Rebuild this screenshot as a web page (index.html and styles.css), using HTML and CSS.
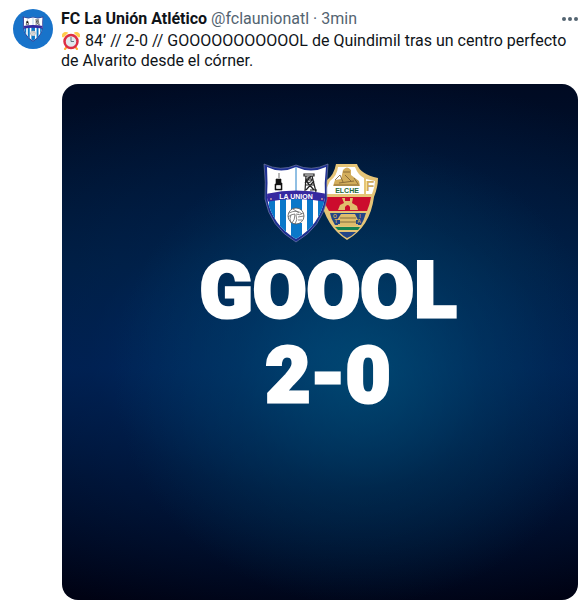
FILE: index.html
```
<!DOCTYPE html>
<html lang="es">
<head>
    <meta charset="UTF-8">
    <meta name="viewport" content="width=device-width, initial-scale=1">
    <title>FC La Unión Atlético</title>
    <link rel="stylesheet" href="styles.css">
</head>
<body>
    <!-- club crest, used by the avatar and the goal card -->
    <svg class="defs" aria-hidden="true">
        <defs>
            <clipPath id="shield">
                <path d="M4 4 Q18 11 33 4 Q48 11 63 4 Q61 20 62 35 Q57 62 33 76 Q9 62 4 35 Q5 20 4 4Z"/>
            </clipPath>
            <symbol id="crest-union" viewBox="0 0 66 80">
                <path d="M1 1 Q18 9 33 2 Q48 9 65 1 Q63 20 64 36 Q59 64 33 79 Q7 64 2 36 Q3 20 1 1Z" fill="#1d2f92" stroke="#7f88ad" stroke-width=".6"/>
                <g clip-path="url(#shield)">
                    <path d="M0 0h66v80H0z" fill="#fff"/>
                    <path d="M6 34h6v42H6zM17 34h6v42h-6zM28 34h11v14H28zM28 60h11v20H28zM44 34h6v42h-6zM55 34h6v42h-6z" fill="#0b78c9"/>
                    <path d="M33 3v28" stroke="#2380c8"/>
                    <path d="M3 31 Q33 24 64 31 V39 Q33 33 3 39Z" fill="#3629a0"/>
                </g>
                <path d="M16 10v5M13 16h5v4h1v7h-7v-6h1zM13 21v5h5v-4h-5" fill="#111" stroke="#111" stroke-width=".6"/>
                <path d="M13.500 22.500h4v3h-4z" fill="#eee"/>
                <path d="M41 11h10v2H41zM43 13l-1 15M49 13l4 16M43 17h7M43 22h8M43 27l8-9M43 18l8 9M42 20l6-7M47 27h7" fill="none" stroke="#222" stroke-width="1.200"/>
                <circle cx="46" cy="17" r="2.500" fill="none" stroke="#222"/>
                <circle cx="8" cy="36" r="1" fill="#c99aa0"/>
                <circle cx="59" cy="36" r="1" fill="#c99aa0"/>
                <circle cx="33" cy="53" r="8" fill="#fff" stroke="#555" stroke-width=".8"/>
                <path d="M26 50q8-4 13 1M25 54q3-3 7-3 0 6-3 9M28 60q-2-5 0-8M33 51q4 2 7-1M33 52q2 5-1 9M35 54l6-1M35 57l4 0M30 46l6 4" fill="none" stroke="#555" stroke-width=".7"/>
            </symbol>
        </defs>
    </svg>

    <article class="post">
        <a class="avatar" href="#" aria-label="FC La Unión Atlético">
            <svg viewBox="0 0 66 80"><use href="#crest-union"/></svg>
        </a>
        <div class="post-body">
            <header class="post-header">
                <a class="name" href="#">FC La Unión Atlético</a>
                <span class="meta">@fclaunionatl · 3min</span>
                <button class="more" type="button" aria-label="Más opciones">
                    <svg viewBox="0 0 16 4"><circle cx="2" cy="2" r="2"/><circle cx="8" cy="2" r="2"/><circle cx="14" cy="2" r="2"/></svg>
                </button>
            </header>
            <p class="text">
                <svg class="clock" viewBox="0 0 36 36" aria-hidden="true">
                    <path d="M2 10 10 2a6 6 0 0 0-8 8M34 10l-8-8a6 6 0 0 1 8 8" fill="#ffcc4d" stroke="#ffcc4d" stroke-width="3"/>
                    <path d="M6 34l5-6M30 34l-5-6" stroke="#ffac33" stroke-width="4" stroke-linecap="round"/>
                    <circle cx="18" cy="19" r="13" fill="#e1e8ed" stroke="#dd2e44" stroke-width="5"/>
                    <path d="M18 10v9h6" fill="none" stroke="#66757f" stroke-width="2"/>
                </svg>
                84’ // 2-0 // GOOOOOOOOOOOL de Quindimil tras un centro perfecto de Alvarito desde el córner.
            </p>
            <section class="goal-card">
                <div class="crests">
                    <svg class="crest" viewBox="0 0 66 80" aria-hidden="true">
                        <use href="#crest-union"/>
                        <text class="crest-label union" x="33" y="36">LA UNION</text>
                    </svg>
                    <svg class="crest-elche" viewBox="0 0 54 78" aria-hidden="true">
                        <path d="M11 1h21q3 10 21 14 0 9-4 19-4 30-27 43Q1 64-5 34L2 17Q9 12 11 1z" fill="#e5c477"/>
                        <path d="M13 4h17q3 8 9 11v16H-1l6-13q7-5 8-14z" fill="#fff"/>
                        <path d="M41 16l9 2q0 6-3 13h-6z" fill="#fff"/>
                        <path d="M-2 34h48q-1 7-4 14H4Q0 42-2 34z" fill="#cc0c2d"/>
                        <path d="M5 50h36q-2 7-5 12H10q-4-6-5-12z" fill="#234588"/>
                        <path d="M10 64h25l-2 3H13z" fill="#168150"/>
                        <path d="M14 69h17q-4 4-9 6-4-2-8-6z" fill="#234588"/>
                        <path d="M18 7q4-5 8 0v5l8 6 1 5H8l2-6 6-1z" fill="#d2ad5c"/>
                        <path d="M10 17l5-5 3 7M18 9h7M20 12l6 6M14 20l15-2M29 15l4 6M9 22h25" fill="none" stroke="#785b2e" stroke-width=".8"/>
                        <path d="M17 35h3v3h5v-3h3l-1 5 5 3 1 4H13l2-5 4-2z" fill="#e0bd6d"/>
                        <path d="M20 47v-3q3-4 5 0v3z" fill="#cc0c2d"/>
                        <path d="M16 51h14l3 6h-2v4h2v2H13v-2h2v-4h-3z" fill="#dfbd6c"/>
                        <path d="M15 55h16M15 59h16" stroke="#6b5a35" stroke-width=".8"/>
                        <text class="crest-label elche" x="22" y="30">ELCHE</text>
                        <text class="crest-label letter" x="45" y="28">F</text>
                        <text class="crest-label motto" x="10" y="55">O</text>
                        <text class="crest-label motto" x="11" y="60">T</text>
                        <text class="crest-label motto" x="35" y="55">I</text>
                        <text class="crest-label motto" x="34" y="60">A</text>
                    </svg>
                </div>
                <h2 class="score">GOOOL<br>2-0</h2>
            </section>
        </div>
    </article>
</body>
</html>
```
FILE: styles.css
```
* {
    box-sizing: border-box;
}

body {
    margin: 0;
    background: #fff;
    color: #0f1419;
    font-family: Roboto, 'Liberation Sans', sans-serif;
    font-size: 16px;
    line-height: 20px;
}

a {
    color: inherit;
    text-decoration: none;
}

.defs {
    position: absolute;
    width: 0;
    height: 0;
}

.post {
    display: flex;
    gap: 8px;
    padding: 9px 10px 4px 13px;
}

.avatar {
    display: flex;
    flex: none;
    align-items: center;
    justify-content: center;
    width: 40px;
    height: 40px;
    border-radius: 50%;
    background: #1873ca;
}

.avatar svg {
    width: 22px;
    height: 26px;
}

.post-body {
    flex: 1;
    min-width: 0;
}

.post-header {
    display: flex;
    gap: 4px;
    align-items: center;
    height: 20px;
}

.name {
    font-weight: 700;
}

.meta {
    color: #536471;
}

.more {
    display: flex;
    margin-left: auto;
    padding: 0;
    border: 0;
    background: none;
    cursor: pointer;
}

.more svg {
    width: 16px;
    height: 4px;
    fill: #536471;
}

.text {
    margin: 2px 0 13px;
}

.clock {
    width: 18px;
    height: 18px;
    margin: 0 1px;
    vertical-align: -4px;
}

.goal-card {
    display: flex;
    flex-direction: column;
    align-items: center;
    aspect-ratio: 1;
    margin-left: 1px;
    padding-top: 79px;
    border-radius: 16px;
    background:
        radial-gradient(ellipse 48% 45% at 58% 56%, rgba(0, 84, 120, 0.65), rgba(0, 70, 105, 0.35) 50%, transparent),
        radial-gradient(ellipse 90% 55% at 50% 52%, rgba(0, 54, 115, 0.75), rgba(0, 40, 90, 0.4) 50%, transparent),
        linear-gradient(#000a22, #001b3d 35%, #001c4d 55%, #000e2d 76%, #000213);
}

.crests {
    display: flex;
    padding-left: 2px;
}

.crest {
    position: relative;
    z-index: 1;
    width: 66px;
    height: 80px;
}

.crest-elche {
    width: 54px;
    height: 78px;
    margin-left: -4px;
    overflow: visible;
}

.crest-label {
    font-family: 'Liberation Sans', sans-serif;
    font-weight: 700;
    text-anchor: middle;
}

.union {
    font-size: 7px;
    fill: #fff;
}

.elche {
    font-size: 7px;
    fill: #266b3b;
}

.letter {
    font-size: 14px;
    fill: #d2ad5c;
}

.motto {
    font-size: 5px;
    fill: #d2ad5c;
}

.score {
    margin: 5px 0 0 16px;
    color: #fff;
    font-size: 78px;
    font-weight: 900;
    line-height: 85px;
    text-align: center;
    -webkit-text-stroke: 3px #fff;
}
```
